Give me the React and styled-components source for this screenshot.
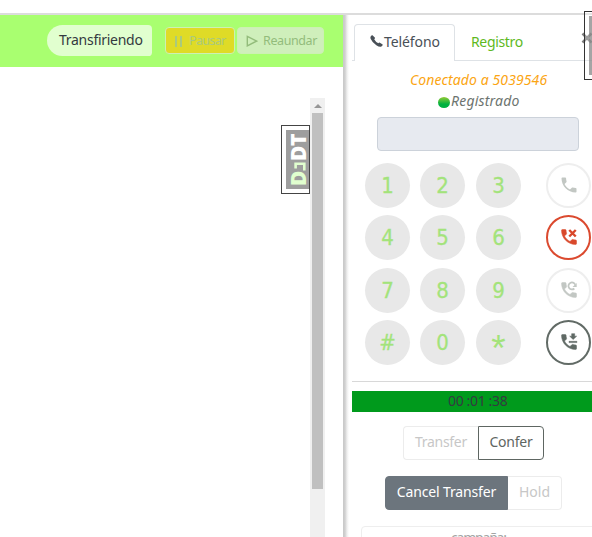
import React from 'react';
import styled, { createGlobalStyle } from 'styled-components';

const GlobalStyle = createGlobalStyle`
  * { box-sizing: border-box; }
  body {
    margin: 0;
    overflow: hidden;
    background: #fff;
    font-family: "Noto Sans", "Open Sans", sans-serif;
    font-size: 14px;
    color: #343a40;
  }
  button { font: inherit; padding: 0; margin: 0; }
`;

const Page = styled.div`
  position: relative;
  width: 592px;
  height: 537px;
  overflow: hidden;
  padding-top: 13px;
`;

const Columns = styled.div`
  display: flex;
  height: 524px;
  border-top: 2px solid #dcdcdc;
`;

const Main = styled.main`
  width: 343px;
  display: flex;
  flex-direction: column;
`;

const StatusBar = styled.header`
  height: 52px;
  flex: none;
  background: #a9ff70;
  display: flex;
  align-items: flex-start;
  padding-left: 47px;
`;

const Status = styled.div`
  width: 105px;
  height: 31px;
  margin-top: 10px;
  border-radius: 16px 4px 4px 16px;
  background: #e1ffcf;
  line-height: 30px;
  padding-left: 12px;
  letter-spacing: -0.28px;
  white-space: nowrap;
`;

const StateButton = styled.button`
  display: flex;
  align-items: center;
  width: ${p => p.$w}px;
  height: 27px;
  margin: 12px 0 0 ${p => p.$gap}px;
  padding-left: 8px;
  border: 1px solid #cdf0b4;
  border-radius: 4px;
  background: ${p => p.$bg};
  color: ${p => p.$color};
  font-size: 12.5px;
  letter-spacing: ${p => p.$spacing}px;
  white-space: nowrap;
  svg { flex: none; margin-right: ${p => p.$iconGap}px; }
`;

const Content = styled.div`
  flex: 1;
  display: flex;
  justify-content: flex-end;
  padding: 31px 18px 0 0;
`;

const Handle = styled.div`
  width: 29px;
  height: 69px;
  margin-top: 27px;
  border: 1px solid #444;
  padding: 4px 0 4px 4px;
`;

const HandleLabel = styled.div`
  width: 23px;
  height: 59px;
  background: #9e9e9e;
  display: flex;
  align-items: center;
  justify-content: center;
  writing-mode: vertical-rl;
  transform: rotate(180deg);
  color: #fff;
  font: 800 21px/17px "Open Sans", sans-serif;
  letter-spacing: -0.4px;
  padding-right: 2px;
  white-space: nowrap;
  span { color: #e1ffcf; }
`;

const JMark = styled.svg`
  width: 12px;
  height: 9px;
  margin: 0 3px 1px 0;
`;

const Track = styled.div`
  width: 15px;
  background: #f0f0f0;
  display: flex;
  flex-direction: column;
  align-items: center;
`;

const Arrow = styled.div`
  margin: 6px 0 5px;
  border: 4px solid transparent;
  border-top: 0;
  border-bottom-color: #969696;
`;

const Thumb = styled.div`
  width: 11px;
  height: 376px;
  background: #c0c0c0;
`;

const Divider = styled.div`
  width: 9px;
  background: linear-gradient(90deg, #c8c8c8 0, #d0d0d0 2px, #eee 4px, #fff 6px);
`;

const Phone = styled.aside`
  width: 240px;
  overflow: hidden;
`;

const Tabs = styled.nav`
  display: flex;
  height: 46px;
  padding: 9px 0 0 2px;
  box-shadow: inset 0 -1px #dee2e6;
`;

const Tab = styled.div`
  display: flex;
  align-items: center;
  height: 37px;
  padding: 0 0 3px 15px;
  width: ${p => (p.$active ? 101 : 90)}px;
  border: 1px solid ${p => (p.$active ? '#dee2e6' : 'transparent')};
  border-bottom: 0;
  border-radius: 4px 4px 0 0;
  background: ${p => (p.$active ? '#fff' : 'transparent')};
  color: ${p => (p.$active ? '#495057' : '#5eb91e')};
  letter-spacing: ${p => (p.$active ? -0.1 : -0.35)}px;
  white-space: nowrap;
  svg { flex: none; margin-right: 1px; }
`;

const Notice = styled.div`
  height: 21px;
  line-height: 21px;
  padding-left: ${p => p.$left}px;
  margin-top: ${p => p.$top || 0}px;
  display: flex;
  align-items: center;
  font-style: italic;
  letter-spacing: ${p => p.$spacing}px;
  color: ${p => p.$color};
  white-space: nowrap;
`;

const Dot = styled.span`
  width: 12px;
  height: 11px;
  margin: 3px 1px 0 0;
  border-radius: 50%;
  background: linear-gradient(#93cb35, #00b140 65%);
`;

const NumberField = styled.div`
  width: 202px;
  height: 34px;
  margin: 6px 0 0 25px;
  border: 1px solid #ccd2da;
  border-radius: 4px;
  background: #e7eaf0;
`;

const Keypad = styled.div`
  display: grid;
  grid-template-columns: 55px 56px 70px 45px;
  grid-template-rows: 52px 53px 52px 45px;
  margin: 12px 0 0 13px;
`;

const Key = styled.button`
  width: 45px;
  height: 45px;
  border: 0;
  border-radius: 50%;
  background: #e8e8e8;
  color: #a3e37b;
  -webkit-text-stroke: ${p => (p.$star ? 0 : 0.3)}px #a3e37b;
  font: ${p => (p.$star ? '37px/57px "Liberation Sans"' : '22px/45px "DejaVu Sans Condensed", "DejaVu Sans"')}, sans-serif;
  font-stretch: condensed;
  text-align: center;
  display: flex;
  justify-content: center;
  align-items: flex-start;
`;

const CallKey = styled.button`
  width: 45px;
  height: 45px;
  display: flex;
  align-items: center;
  justify-content: center;
  padding: 0 0 2px 1px;
  border: 2px solid ${p => p.$ring};
  border-radius: 50%;
  background: #fff;
  color: ${p => p.$color};
`;

const Timer = styled.div`
  height: 31px;
  margin-top: 16px;
  border-top: 1px solid #d8d8d8;
  padding-top: 9px;
  div {
    height: 21px;
    background: #009a1c;
    line-height: 19px;
    padding-left: 96px;
    letter-spacing: -0.2px;
    word-spacing: -0.6px;
    white-space: nowrap;
  }
`;

const Group = styled.div`
  display: flex;
  margin: ${p => p.$top}px 0 0 ${p => p.$left}px;
`;

const Action = styled.button`
  width: ${p => p.$w}px;
  height: 34px;
  border: 1px solid ${p => p.$border};
  border-radius: ${p => (p.$last ? '0 4px 4px 0' : '4px 0 0 4px')};
  border-left-width: ${p => (p.$joined ? 0 : 1)}px;
  border-right-width: ${p => (p.$open ? 0 : 1)}px;
  background: ${p => p.$bg || '#fff'};
  color: ${p => p.$color};
  letter-spacing: ${p => p.$spacing}px;
  line-height: 30px;
  padding-bottom: 2px;
  white-space: nowrap;
`;

const Campaign = styled.div`
  height: 50px;
  width: 260px;
  margin: 16px 0 0 9px;
  padding-left: 89px;
  border: 1px solid #eee;
  border-radius: 4px;
  line-height: 22px;
  letter-spacing: -1.2px;
  color: #a4a4a4;
`;

const EdgeTool = styled.div`
  position: absolute;
  left: 584px;
  top: 11px;
  width: 29px;
  height: 69px;
  border: 1px solid #333;
  padding: 4px;
  background: #ffffff40;
  &::after {
    content: '';
    display: block;
    height: 59px;
    background: #828282b8;
  }
`;

const CloseMark = styled.svg`
  position: absolute;
  left: 581px;
  top: 32px;
`;

const handset = 'M6.62 10.79c1.44 2.83 3.76 5.14 6.59 6.59l2.2-2.2c.27-.27.67-.36 1.02-.24 1.12.37 2.33.57 3.57.57.55 0 1 .45 1 1V20c0 .55-.45 1-1 1-9.39 0-17-7.61-17-17 0-.55.45-1 1-1h3.5c.55 0 1 .45 1 1 0 1.25.2 2.45.57 3.57.11.35.03.74-.25 1.02z';

function CallIcon({ kind }) {
  return (
    <svg width="20" height="20" viewBox="0 0 24 24" fill="currentColor" stroke="currentColor" strokeWidth={kind === 'call' ? 0 : 0.6}>
      <path d={handset} />
      {kind === 'cancel' && (
        <path d="M12.3 3.6l7.8 7.8M20.1 3.6l-7.8 7.8" strokeWidth="2.9" />
      )}
      {kind === 'redial' && (
        <>
          <path d="M18.4 10.2A4.2 4.2 0 1 1 19.4 5.5" fill="none" strokeWidth="2.1" />
          <path d="M21.2 3.5v5h-5z" strokeWidth="0" />
        </>
      )}
      {kind === 'hold' && <path d="M15.2 2h3.6v3h2.4L17 9 12.8 5h2.4zM12 11.2h9.5v1.5H12z" />}
    </svg>
  );
}

const rows = [
  { keys: ['1', '2', '3'], kind: 'call', color: '#c2c7c3', ring: '#eeeeee' },
  { keys: ['4', '5', '6'], kind: 'cancel', color: '#d9482b', ring: '#db4a2f' },
  { keys: ['7', '8', '9'], kind: 'redial', color: '#c2c7c3', ring: '#eeeeee' },
  { keys: ['#', '0', '*'], kind: 'hold', color: '#5f6964', ring: '#626b66' },
];

export default function App() {
  return (
    <Page>
      <GlobalStyle />
      <Columns>
        <Main>
          <StatusBar>
            <Status>Transfiriendo</Status>
            <StateButton $w={70} $gap={13} $bg="#dfdb27" $color="#a9ca7d" $spacing={-0.65} $iconGap={6}>
              <svg width="9" height="12" viewBox="0 0 9 12" fill="currentColor">
                <path d="M1 1h2v11H1zM6 1h2v11H6z" />
              </svg>
              Pausar
            </StateButton>
            <StateButton $w={87} $gap={2} $bg="#cfefbb" $color="#93bc7b" $spacing={-0.4} $iconGap={5}>
              <svg width="12" height="12" viewBox="0 0 12 12" fill="none" stroke="currentColor" strokeWidth="1.4">
                <path d="M1.3 1.3v9.6l9.3-4.8z" />
              </svg>
              Reaundar
            </StateButton>
          </StatusBar>
          <Content>
            <Handle>
              <HandleLabel>
                <span>D</span>
                <JMark viewBox="0 0 12 9" fill="none" stroke="#e1ffcf" strokeWidth="2.6">
                  <path d="M10.4 2.5V7.3H1.7V.6" />
                </JMark>
                <div>DT</div>
              </HandleLabel>
            </Handle>
            <Track><Arrow /><Thumb /></Track>
          </Content>
        </Main>
        <Divider />
        <Phone>
          <Tabs>
            <Tab $active>
              <svg width="13" height="13" viewBox="0 0 13 13" fill="currentColor">
                <path d="M.8 1.3Q1.5 0 2.5.2L5 2.8Q5.2 3.7 4.2 4.2 5.6 6.9 8.4 8.3 9 7.3 9.9 7.7L12.7 9.5Q13 10.5 11.4 11.5 9.7 12.4 6.3 10.2 2.2 7.6.6 3.8.1 2.2.8 1.3z" />
              </svg>
              Teléfono
            </Tab>
            <Tab>Registro</Tab>
          </Tabs>
          <Notice $left={58} $top={8} $spacing={0.1} $color="#fba513">Conectado a 5039546</Notice>
          <Notice $left={86} $spacing={0.2} $color="#6d746f"><Dot />Registrado</Notice>
          <NumberField />
          <Keypad>
            {rows.map(row => (
              <React.Fragment key={row.kind}>
                {row.keys.map(k => <Key key={k} $star={k === '*'}>{k}</Key>)}
                <CallKey $color={row.color} $ring={row.ring}><CallIcon kind={row.kind} /></CallKey>
              </React.Fragment>
            ))}
          </Keypad>
          <Timer><div>00 :01 :38</div></Timer>
          <Group $top={14} $left={51}>
            <Action $w={75} $border="#ececec" $color="#c7c7c7" $spacing={-0.3} $open>Transfer</Action>
            <Action $w={66} $border="#5e6662" $color="#5e6662" $spacing={-0.25} $last>Confer</Action>
          </Group>
          <Group $top={16} $left={33}>
            <Action $w={123} $border="#6c757d" $bg="#6c757d" $color="#fff" $spacing={-0.15}>Cancel Transfer</Action>
            <Action $w={54} $border="#ececec" $color="#c7c7c7" $spacing={0} $last $joined>Hold</Action>
          </Group>
          <Campaign>campaña:</Campaign>
        </Phone>
      </Columns>
      <CloseMark width="12" height="12" viewBox="0 0 12 12" stroke="#7c7c7c" strokeWidth="2.5">
        <path d="M1.5 1.5l9 9M10.5 1.5l-9 9" />
      </CloseMark>
      <EdgeTool />
    </Page>
  );
}
